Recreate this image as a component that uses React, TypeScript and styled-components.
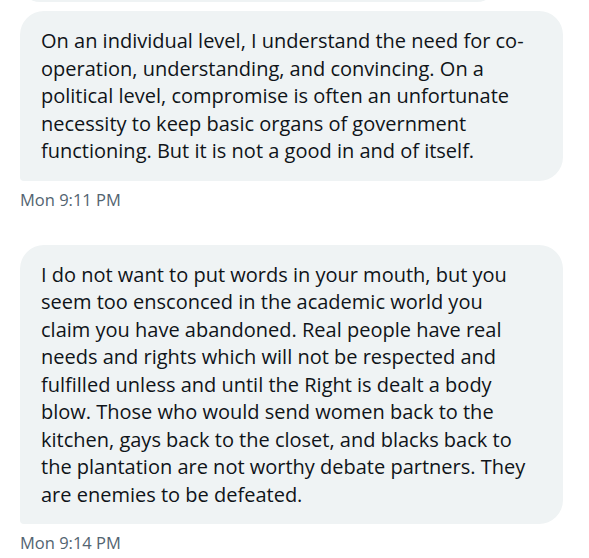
import React from "react";
import styled, { createGlobalStyle } from "styled-components";

const GlobalStyle = createGlobalStyle`
  html, body {
    margin: 0;
    padding: 0;
    background: #ffffff;
  }
  body {
    font-family: "Open Sans", "Noto Sans", "Liberation Sans", sans-serif;
    -webkit-font-smoothing: antialiased;
  }
`;

const Thread = styled.div`
  display: flex;
  flex-direction: column;
  align-items: flex-start;
  padding: 0 26px 0 20px;
  width: 589px;
  height: 558px;
  box-sizing: border-box;
  overflow: hidden;
`;

const Group = styled.div`
  display: flex;
  flex-direction: column;
  align-items: flex-start;
  gap: 9px;
  width: 100%;
  margin-bottom: 34px;
`;

const Message = styled.div`
  width: 100%;
`;

const Bubble = styled.div<{ $tail?: boolean; $width?: string }>`
  box-sizing: border-box;
  width: ${(p) => p.$width ?? "100%"};
  background: #eff3f4;
  color: #0f1419;
  font-size: 20px;
  line-height: 27.5px;
  padding: 16px 21px;
  border-radius: ${(p) => (p.$tail ? "24px 24px 24px 4px" : "24px")};
`;

const PrevBubble = styled(Bubble)`
  height: 40px;
  margin-top: -38px;
`;

const Line = styled.span`
  display: block;
  white-space: nowrap;
`;

const Timestamp = styled.div`
  margin-top: 8px;
  font-size: 16.5px;
  line-height: 22px;
  color: #536471;
`;

const messages = [
  {
    lines: [
      "On an individual level, I understand the need for co-",
      "operation, understanding, and convincing. On a",
      "political level, compromise is often an unfortunate",
      "necessity to keep basic organs of government",
      "functioning. But it is not a good in and of itself.",
    ],
    time: "Mon 9:11 PM",
    prev: true,
  },
  {
    lines: [
      "I do not want to put words in your mouth, but you",
      "seem too ensconced in the academic world you",
      "claim you have abandoned. Real people have real",
      "needs and rights which will not be respected and",
      "fulfilled unless and until the Right is dealt a body",
      "blow. Those who would send women back to the",
      "kitchen, gays back to the closet, and blacks back to",
      "the plantation are not worthy debate partners. They",
      "are enemies to be defeated.",
    ],
    time: "Mon 9:14 PM",
    prev: false,
  },
];

export default function App() {
  return (
    <>
      <GlobalStyle />
      <Thread>
        {messages.map((m, i) => (
          <Group key={i}>
            {m.prev && <PrevBubble $width="477px" />}
            <Message>
              <Bubble $tail>
                {m.lines.map((l, j) => (
                  <Line key={j}>{l}</Line>
                ))}
              </Bubble>
              <Timestamp>{m.time}</Timestamp>
            </Message>
          </Group>
        ))}
      </Thread>
    </>
  );
}
